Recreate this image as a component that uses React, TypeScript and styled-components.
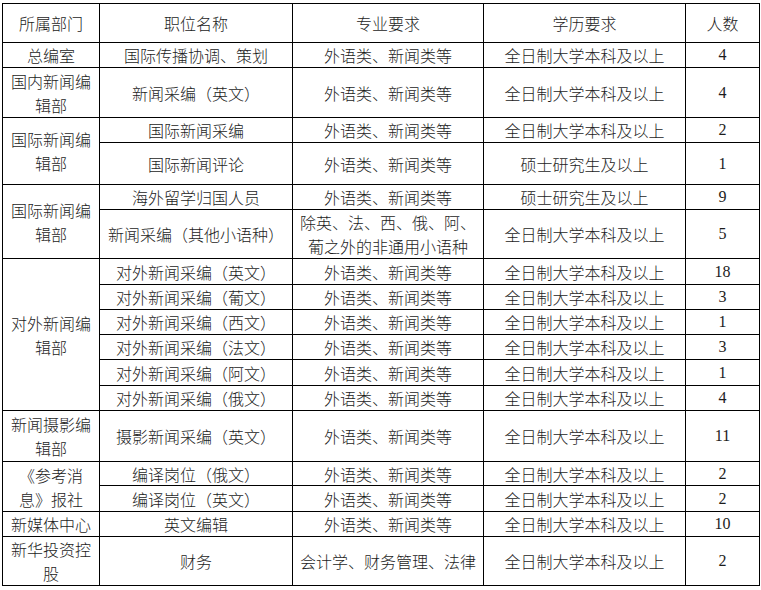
import React from "react";
import styled, { createGlobalStyle } from "styled-components";

const Global = createGlobalStyle`
  html, body { margin: 0; padding: 0; background: #ffffff; }
  body { font-family: "Noto Sans CJK SC", "Noto Sans", sans-serif; color: #1c1c1c; }
`;

const Page = styled.div`
  padding: 3px 0 0 2px;
`;

const Table = styled.div`
  display: grid;
  width: 758px;
  box-sizing: border-box;
  grid-template-columns: 97px 193px 191px 202px 74px;
  grid-template-rows: 39px 25px 50px 25px 42px 25px 49px 26px 25px 25px 25px 26px 25px 51px 24px 26px 25px 49px;
  border-left: 1px solid #000;
  border-top: 1px solid #000;
`;

const Cell = styled.div<{ $col: number; $span?: number; $num?: boolean }>`
  grid-column: ${(p) => p.$col};
  grid-row: span ${(p) => p.$span ?? 1};
  box-sizing: border-box;
  border-right: 1px solid #000;
  border-bottom: 1px solid #000;
  display: flex;
  align-items: center;
  justify-content: center;
  text-align: center;
  padding: 0 4px;
  font-size: 16px;
  line-height: 24px;
  font-weight: 300;
  font-family: ${(p) =>
    p.$num
      ? '"Liberation Serif", "Noto Sans CJK SC", serif'
      : '"Noto Sans CJK SC", "Noto Sans", sans-serif'};
  overflow: hidden;
`;

type Row = { dept?: string; span?: number; job: string; major: string; edu: string; n: string };

const MAJ = "外语类、新闻类等";
const FULL = "全日制大学本科及以上";
const MS = "硕士研究生及以上";

const rows: Row[] = [
  { dept: "总编室", job: "国际传播协调、策划", major: MAJ, edu: FULL, n: "4" },
  { dept: "国内新闻编辑部", job: "新闻采编（英文）", major: MAJ, edu: FULL, n: "4" },
  { dept: "国际新闻编辑部", span: 2, job: "国际新闻采编", major: MAJ, edu: FULL, n: "2" },
  { job: "国际新闻评论", major: MAJ, edu: MS, n: "1" },
  { dept: "国际新闻编辑部", span: 2, job: "海外留学归国人员", major: MAJ, edu: MS, n: "9" },
  { job: "新闻采编（其他小语种）", major: "除英、法、西、俄、阿、葡之外的非通用小语种", edu: FULL, n: "5" },
  { dept: "对外新闻编辑部", span: 6, job: "对外新闻采编（英文）", major: MAJ, edu: FULL, n: "18" },
  { job: "对外新闻采编（葡文）", major: MAJ, edu: FULL, n: "3" },
  { job: "对外新闻采编（西文）", major: MAJ, edu: FULL, n: "1" },
  { job: "对外新闻采编（法文）", major: MAJ, edu: FULL, n: "3" },
  { job: "对外新闻采编（阿文）", major: MAJ, edu: FULL, n: "1" },
  { job: "对外新闻采编（俄文）", major: MAJ, edu: FULL, n: "4" },
  { dept: "新闻摄影编辑部", job: "摄影新闻采编（英文）", major: MAJ, edu: FULL, n: "11" },
  { dept: "《参考消息》报社", span: 2, job: "编译岗位（俄文）", major: MAJ, edu: FULL, n: "2" },
  { job: "编译岗位（英文）", major: MAJ, edu: FULL, n: "2" },
  { dept: "新媒体中心", job: "英文编辑", major: MAJ, edu: FULL, n: "10" },
  { dept: "新华投资控股", job: "财务", major: "会计学、财务管理、法律", edu: FULL, n: "2" },
];

export default function App() {
  return (
    <Page>
      <Global />
      <Table>
        <Cell $col={1}>所属部门</Cell>
        <Cell $col={2}>职位名称</Cell>
        <Cell $col={3}>专业要求</Cell>
        <Cell $col={4}>学历要求</Cell>
        <Cell $col={5}>人数</Cell>
        {rows.map((r, i) => (
          <React.Fragment key={i}>
            {r.dept && (
              <Cell $col={1} $span={r.span}>
                {r.dept}
              </Cell>
            )}
            <Cell $col={2}>{r.job}</Cell>
            <Cell $col={3}>{r.major}</Cell>
            <Cell $col={4}>{r.edu}</Cell>
            <Cell $col={5} $num>
              {r.n}
            </Cell>
          </React.Fragment>
        ))}
      </Table>
    </Page>
  );
}
